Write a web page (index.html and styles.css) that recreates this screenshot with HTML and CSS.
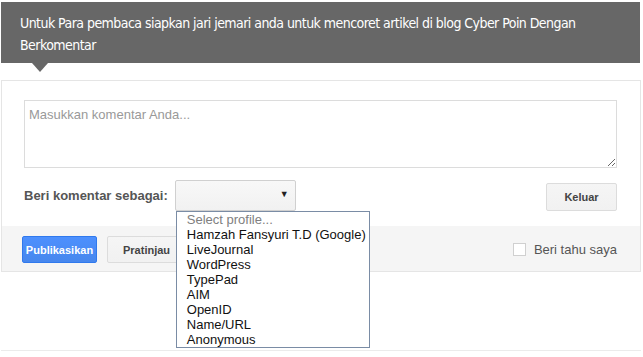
FILE: index.html
```html
<!DOCTYPE html>
<html>
<head>
  <title>Komentar</title>
  <link rel="stylesheet" href="styles.css">
</head>
<body>
  <div class="comments">
    <div class="comment-intro">
      Untuk Para pembaca siapkan jari jemari anda untuk mencoret artikel di blog Cyber Poin Dengan Berkomentar
    </div>

    <div class="comment-form">
      <div class="form-body">
        <textarea class="comment-input" placeholder="Masukkan komentar Anda..."></textarea>

        <div class="identity-row">
          <div class="identity-pick">
            <span class="identity-label">Beri komentar sebagai:</span>
            <div class="profile-select">
              <span class="select-arrow">&#9660;</span>
              <ul class="profile-list">
                <li class="placeholder">Select profile...</li>
                <li>Hamzah Fansyuri T.D (Google)</li>
                <li>LiveJournal</li>
                <li>WordPress</li>
                <li>TypePad</li>
                <li>AIM</li>
                <li>OpenID</li>
                <li>Name/URL</li>
                <li>Anonymous</li>
              </ul>
            </div>
          </div>
          <button class="btn">Keluar</button>
        </div>
      </div>

      <div class="form-footer">
        <div class="actions">
          <button class="btn btn-primary">Publikasikan</button>
          <button class="btn">Pratinjau</button>
        </div>
        <label class="notify">
          <span class="checkbox"></span> Beri tahu saya
        </label>
      </div>
    </div>

    <div class="page-rule"></div>
  </div>
</body>
</html>
```

FILE: styles.css
```css
/* Base */
body {
  margin: 0;
  background: white;
  font-family: "Liberation Sans", Arial, sans-serif;
}

.comments {
  padding: 2px 2px 0 1px;
}

/* Intro bubble */
.comment-intro {
  position: relative;
  background: #676767;
  color: #fff;
  font-family: "DejaVu Sans Condensed", "Liberation Sans", sans-serif;
  font-size: 14px;
  line-height: 22px;
  letter-spacing: -0.55px;
  padding: 10px 20px 7px 19px;
  margin-right: 1px;
}

.comment-intro:after {
  content: '';
  position: absolute;
  left: 31px;
  bottom: -9px;
  border-left: 8px solid transparent;
  border-right: 8px solid transparent;
  border-top: 9px solid #676767;
}

/* Form box */
.comment-form {
  margin-top: 17px;
  border: 1px solid #e5e5e5;
}

.form-body {
  padding: 19px 23px 15px 22px;
}

.comment-input {
  display: block;
  box-sizing: border-box;
  width: 100%;
  height: 68px;
  margin: 0;
  border: 1px solid #dcdcdc;
  padding: 6px 4px;
  font-family: "Liberation Sans", Arial, sans-serif;
  font-size: 13px;
  color: #333;
}

.comment-input::placeholder {
  color: #999;
}

.identity-row {
  display: flex;
  justify-content: space-between;
  align-items: flex-end;
  margin-top: 12px;
}

.identity-pick {
  display: flex;
  align-items: center;
  gap: 7px;
}

.identity-label {
  font-size: 13px;
  font-weight: bold;
  color: #555;
}

.profile-select {
  position: relative;
  box-sizing: border-box;
  width: 121px;
  height: 31px;
  border: 1px solid #d0d0d0;
  border-radius: 2px;
  background: linear-gradient(#f8f8f8, #f1f1f1);
}

.select-arrow {
  position: absolute;
  right: 6px;
  top: 8px;
  font-size: 9px;
  color: #222;
}

/* Open dropdown list */
.profile-list {
  position: absolute;
  top: 30px;
  left: 0;
  width: 194px;
  box-sizing: border-box;
  margin: 0;
  padding: 0 0 0 10px;
  list-style: none;
  background: white;
  border: 1px solid #7a8ca5;
  font-size: 13px;
  line-height: 15px;
  color: #111;
  z-index: 2;
}

.profile-list .placeholder {
  color: #808080;
}

/* Buttons */
.btn {
  box-sizing: border-box;
  height: 28px;
  padding: 0 15px;
  border: 1px solid #dcdcdc;
  border-radius: 2px;
  background: linear-gradient(#f5f5f5, #f1f1f1);
  color: #444;
  font-family: "Liberation Sans", Arial, sans-serif;
  font-size: 11px;
  font-weight: bold;
  cursor: pointer;
}

.identity-row .btn {
  width: 71px;
}

.btn-primary {
  width: 75px;
  padding: 0;
  border-color: #3079ed;
  background: linear-gradient(#4d90fe, #4787ed);
  color: #fff;
}

.form-footer {
  display: flex;
  justify-content: space-between;
  align-items: center;
  background: #f5f5f5;
  padding: 10px 23px 8px 20px;
}

.actions {
  display: flex;
  gap: 10px;
}

.actions .btn {
  height: 27px;
}

.notify {
  display: flex;
  align-items: center;
  gap: 8px;
  font-size: 13px;
  color: #555;
}

.checkbox {
  display: inline-block;
  box-sizing: border-box;
  width: 13px;
  height: 13px;
  border: 1px solid #d0d0d0;
  background: white;
}

.page-rule {
  margin-top: 78px;
  border-top: 1px solid #ebebeb;
}
```
